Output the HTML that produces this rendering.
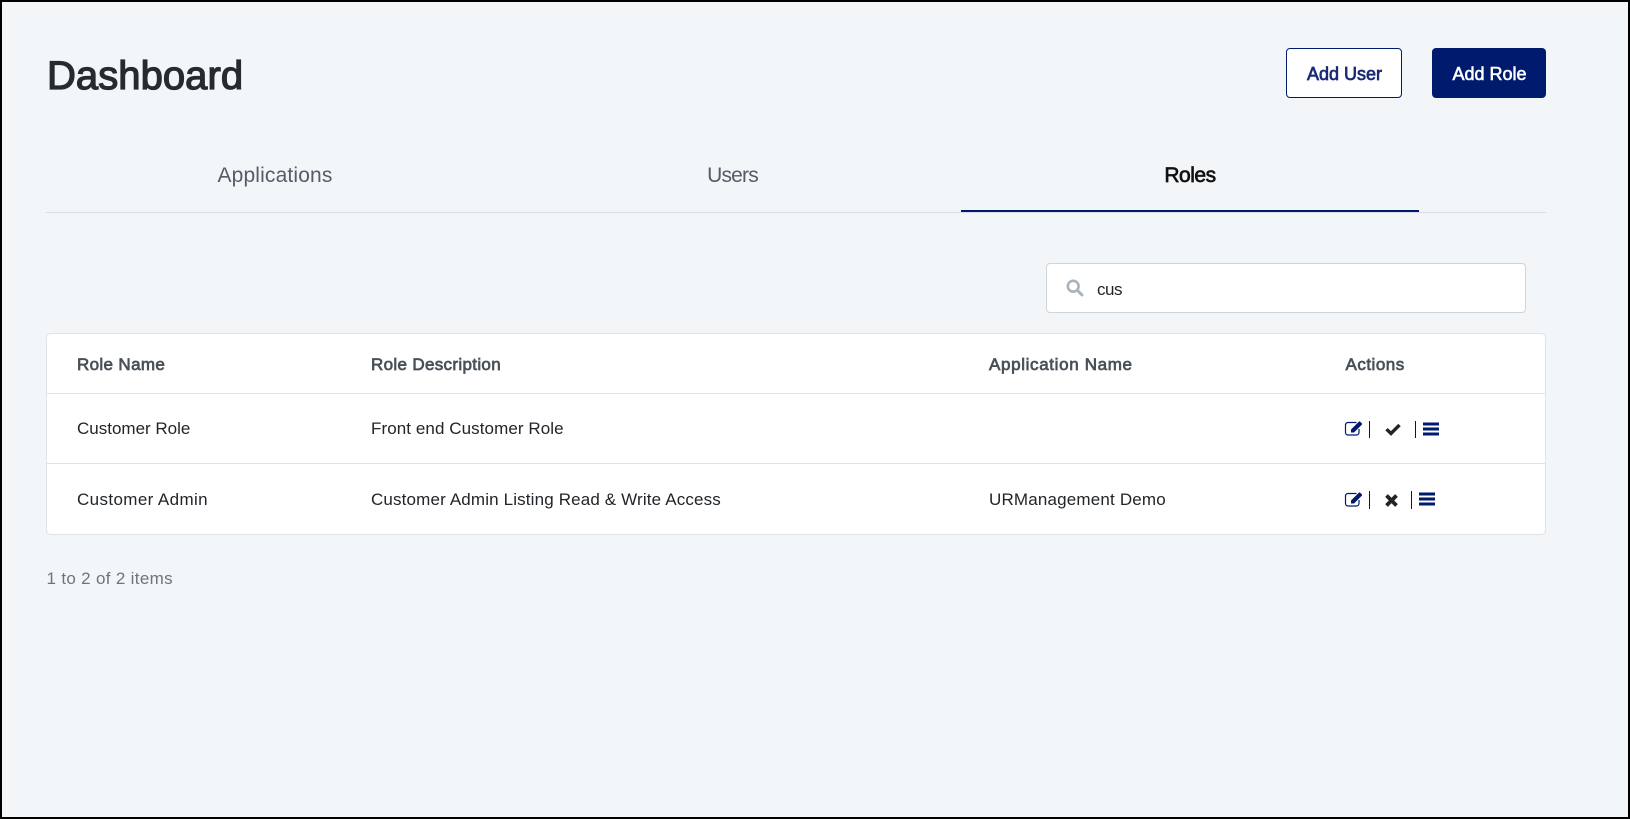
<!DOCTYPE html>
<html><head><meta charset="utf-8"><title>Dashboard</title>
<style>
html,body{margin:0;padding:0;background:#f3f6f9}
body{width:1630px;height:819px;position:relative;overflow:hidden;font-family:"Liberation Sans",sans-serif;color:#212529}
.frame{position:absolute;left:0;top:0;width:1630px;height:819px;box-sizing:border-box;border:2px solid #000;pointer-events:none}
.t{position:absolute;white-space:nowrap;line-height:24px;height:24px}
.box{position:absolute;box-sizing:border-box}
svg{position:absolute;overflow:visible}
.th{font-size:17px;font-weight:400;-webkit-text-stroke:0.7px #495057;color:#495057}
.td{font-size:17px;color:#212529}
.sep{position:absolute;width:1px;background:#0b1538}
</style></head><body>
<div class="t" style="left:47px;top:54px;height:44px;line-height:44px;font-size:40px;font-weight:400;-webkit-text-stroke:1.3px #272b30;letter-spacing:0.05px;color:#272b30">Dashboard</div>

<div class="box" style="left:1286px;top:48px;width:116px;height:50px;background:#fff;border:1px solid #001a6e;border-radius:4px"></div>
<div class="t" style="left:1286.5px;width:116px;text-align:center;top:62px;font-size:18px;-webkit-text-stroke:0.7px #1b2a78;color:#1b2a78">Add User</div>
<div class="box" style="left:1432px;top:48px;width:114px;height:50px;background:#001a6e;border-radius:4px"></div>
<div class="t" style="left:1432.5px;width:114px;text-align:center;top:62px;font-size:18px;-webkit-text-stroke:0.6px #fff;color:#fff">Add Role</div>

<div class="t" style="left:46px;width:458px;text-align:center;top:164px;font-size:21px;letter-spacing:0.15px;color:#555c66">Applications</div>
<div class="t" style="left:504px;width:457px;text-align:center;top:164px;font-size:21px;letter-spacing:-0.8px;color:#555c66">Users</div>
<div class="t" style="left:961px;width:458px;text-align:center;top:164px;font-size:21px;letter-spacing:-0.5px;-webkit-text-stroke:0.7px #111;color:#111">Roles</div>
<div class="box" style="left:46px;top:212px;width:1500px;height:1px;background:#d9dee6"></div>
<div class="box" style="left:961px;top:210px;width:458px;height:2px;background:#001a6e"></div>

<div class="box" style="left:1046px;top:263px;width:480px;height:50px;background:#fff;border:1px solid #ced4da;border-radius:4px"></div>
<svg style="left:1066px;top:279px" width="18" height="18" viewBox="0 0 18 18"><circle cx="7.2" cy="7.2" r="5.4" fill="none" stroke="#aab4be" stroke-width="2.6"/><path d="M11.2 11.2L16 16" stroke="#aab4be" stroke-width="3" stroke-linecap="round"/></svg>
<div class="t" style="left:1097px;top:278px;font-size:17px;letter-spacing:-0.5px;color:#212529">cus</div>

<div class="box" style="left:46px;top:333px;width:1500px;height:202px;background:#fff;border:1px solid #dfe3e8;border-radius:5px"></div>
<div class="box" style="left:47px;top:393px;width:1498px;height:1px;background:#dfe3e8"></div>
<div class="box" style="left:47px;top:463px;width:1498px;height:1px;background:#dfe3e8"></div>

<div class="t th" style="left:77px;top:353px;letter-spacing:0.35px">Role Name</div>
<div class="t th" style="left:371px;top:353px;letter-spacing:0.33px">Role Description</div>
<div class="t th" style="left:989px;top:353px;letter-spacing:0.65px">Application Name</div>
<div class="t th" style="left:1345.5px;top:353px;letter-spacing:0.5px">Actions</div>

<div class="t td" style="left:77px;top:417px">Customer Role</div>
<div class="t td" style="left:371px;top:417px;letter-spacing:0.08px">Front end Customer Role</div>
<div class="t td" style="left:77px;top:488px;letter-spacing:0.38px">Customer Admin</div>
<div class="t td" style="left:371px;top:488px;letter-spacing:0.15px">Customer Admin Listing Read &amp; Write Access</div>
<div class="t td" style="left:989px;top:488px;letter-spacing:0.18px">URManagement Demo</div>

<!-- row 1 actions -->
<svg style="left:1345px;top:421px" width="19" height="15" viewBox="0 0 19 15"><path d="M14 8v3.5a2.5 2.5 0 0 1-2.5 2.5H3a2.5 2.5 0 0 1-2.5-2.5V4A2.5 2.5 0 0 1 3 1.5h8.5" fill="none" stroke="#001a6e" stroke-width="1.2"/><path d="M6 8.5L13.8 0.7a1 1 0 0 1 1.4 0l1.6 1.6a1 1 0 0 1 0 1.4L9 11.5H6z" fill="#001a6e"/></svg>
<div class="sep" style="left:1369px;top:421px;height:17px"></div>
<svg style="left:1385px;top:423px" width="16" height="12" viewBox="0 0 16 12"><path d="M1.5 6.2L6 10.5 14.5 2" fill="none" stroke="#212529" stroke-width="3.4"/></svg>
<div class="sep" style="left:1415px;top:421px;height:17px"></div>
<svg style="left:1423px;top:422px" width="16" height="14" viewBox="0 0 16 14"><path d="M0 0.5h16v3H0zM0 5.5h16v3H0zM0 10.5h16v3H0z" fill="#001a6e"/></svg>

<!-- row 2 actions -->
<svg style="left:1345px;top:492px" width="19" height="15" viewBox="0 0 19 15"><path d="M14 8v3.5a2.5 2.5 0 0 1-2.5 2.5H3a2.5 2.5 0 0 1-2.5-2.5V4A2.5 2.5 0 0 1 3 1.5h8.5" fill="none" stroke="#001a6e" stroke-width="1.2"/><path d="M6 8.5L13.8 0.7a1 1 0 0 1 1.4 0l1.6 1.6a1 1 0 0 1 0 1.4L9 11.5H6z" fill="#001a6e"/></svg>
<div class="sep" style="left:1369px;top:491px;height:18px"></div>
<svg style="left:1385px;top:494px" width="13" height="13" viewBox="0 0 13 13"><path d="M1.5 1.5L11.5 11.5M11.5 1.5L1.5 11.5" fill="none" stroke="#212529" stroke-width="3.8"/></svg>
<div class="sep" style="left:1411px;top:491px;height:18px"></div>
<svg style="left:1419px;top:492px" width="16" height="14" viewBox="0 0 16 14"><path d="M0 0.5h16v3H0zM0 5.5h16v3H0zM0 10.5h16v3H0z" fill="#001a6e"/></svg>

<div class="t" style="left:46.5px;top:567px;font-size:17px;letter-spacing:0.32px;color:#6c757d">1 to 2 of 2 items</div>
<div class="frame"></div>
</body></html>
